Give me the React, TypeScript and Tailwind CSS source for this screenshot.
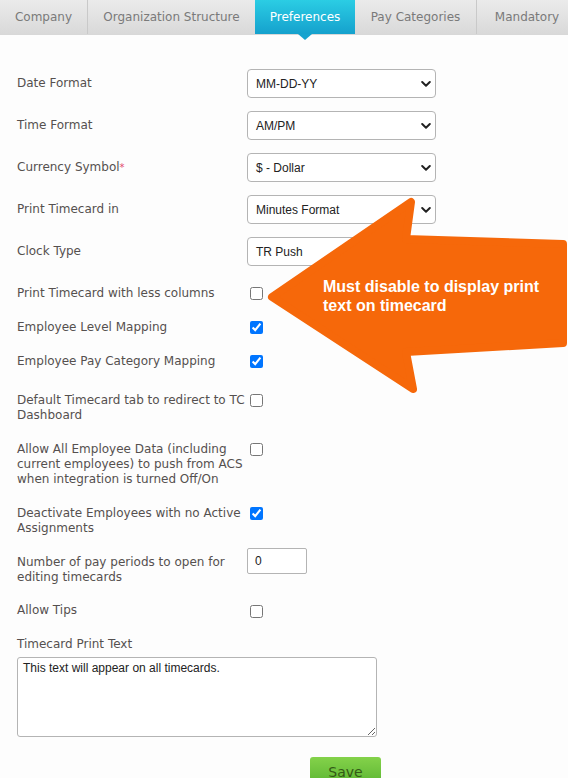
import React from "react";

const labelFont = { fontFamily: '"DejaVu Sans", Verdana, sans-serif' };

function Chevron() {
  return (
    <svg width="10" height="7" viewBox="0 0 10 7" className="absolute right-[4px] top-1/2 -translate-y-1/2">
      <path d="M1.2 1.5 L5 5.2 L8.8 1.5" fill="none" stroke="#222" strokeWidth="2" strokeLinecap="round" strokeLinejoin="round" />
    </svg>
  );
}

function SelectRow({ label, value, required, mt }: { label: string; value: string; required?: boolean; mt: string }) {
  return (
    <div className={`flex items-center h-[29px] ${mt}`}>
      <div className="w-[230px] text-[12px] leading-[15px] text-[#55504f]" style={labelFont}>
        {label}
        {required && <span className="text-[#e2456f] text-[10px] align-top">*</span>}
      </div>
      <div className="relative w-[189px] h-[29px] rounded-[4px] border border-[#b4b4b4] bg-white">
        <div className="pl-[8px] h-full flex items-center text-[12px] text-[#222] font-['Liberation_Sans',Arial,sans-serif]">{value}</div>
        <Chevron />
      </div>
    </div>
  );
}

function CheckRow({ label, checked, mt, cbmt = "mt-[1px]" }: { label: React.ReactNode; checked?: boolean; mt: string; cbmt?: string }) {
  return (
    <div className={`flex items-start ${mt}`}>
      <div className="w-[233px] text-[12px] leading-[15px] text-[#55504f]" style={labelFont}>
        {label}
      </div>
      <input type="checkbox" defaultChecked={checked} className={`m-0 w-[13px] h-[13px] ${cbmt}`} />
    </div>
  );
}

export default function App() {
  const tabs = [
    { name: "Company", w: "w-[88px]" },
    { name: "Organization Structure", w: "w-[167px]" },
    { name: "Preferences", w: "w-[100px]", active: true },
    { name: "Pay Categories", w: "w-[122px]" },
    { name: "Mandatory", w: "w-[100px]" },
  ];
  return (
    <div className="relative w-[568px] h-[778px] overflow-hidden bg-[#fdfdfd]">
      {/* tabs */}
      <div className="flex h-[35px] border-b border-[#d8d8d8] bg-gradient-to-b from-[#ebebeb] to-[#d9d9d9]" style={labelFont}>
        {tabs.map((t, i) =>
          t.active ? (
            <div key={t.name} className={`relative ${t.w} shrink-0 h-[34px] flex items-center justify-center text-[12px] text-white bg-gradient-to-b from-[#2bcde4] to-[#15a1cd]`}>
              {t.name}
              <div className="absolute left-1/2 -translate-x-1/2 top-[34px] w-0 h-0 border-l-[7px] border-r-[7px] border-t-[6px] border-l-transparent border-r-transparent border-t-[#16a3cf]" />
            </div>
          ) : (
            <div
              key={t.name}
              className={`${t.w} shrink-0 h-[34px] flex items-center justify-center text-[12px] text-[#7a7a7a] ${i === 0 || i === 3 ? "border-r border-[#c9c9c9]" : ""}`}
            >
              {t.name}
            </div>
          )
        )}
      </div>

      <div className="pl-[17px]">
        <SelectRow label="Date Format" value="MM-DD-YY" mt="mt-[34px]" />
        <SelectRow label="Time Format" value="AM/PM" mt="mt-[13px]" />
        <SelectRow label="Currency Symbol" value="$ - Dollar" required mt="mt-[13px]" />
        <SelectRow label="Print Timecard in" value="Minutes Format" mt="mt-[13px]" />
        <SelectRow label="Clock Type" value="TR Push" mt="mt-[13px]" />

        <CheckRow label="Print Timecard with less columns" mt="mt-[20px]" />
        <CheckRow label="Employee Level Mapping" checked mt="mt-[19px]" />
        <CheckRow label="Employee Pay Category Mapping" checked mt="mt-[19px]" />
        <CheckRow label="Default Timecard tab to redirect to TC Dashboard" mt="mt-[24px]" />
        <CheckRow label="Allow All Employee Data (including current employees) to push from ACS when integration is turned Off/On" mt="mt-[19px]" />
        <CheckRow label="Deactivate Employees with no Active Assignments" checked mt="mt-[19px]" />

        <div className="flex items-start mt-[12px]">
          <div className="w-[230px] mt-[7px] text-[12px] leading-[15px] text-[#55504f]" style={labelFont}>
            Number of pay periods to open for editing timecards
          </div>
          <div className="w-[60px] h-[26px] rounded-[2px] border border-[#b4b4b4] bg-white pl-[7px] flex items-center text-[12px] text-[#222] font-['Liberation_Sans',Arial,sans-serif]">
            0
          </div>
        </div>

        <CheckRow label="Allow Tips" mt="mt-[18px]" cbmt="mt-[2px]" />

        <div className="mt-[19px] text-[12px] leading-[15px] text-[#55504f]" style={labelFont}>
          Timecard Print Text
        </div>
        <textarea
          className="mt-[5px] block w-[360px] h-[80px] rounded-[3px] border border-[#b4b4b4] bg-white px-[5px] py-[3px] text-[12px] leading-[15px] text-[#222] font-['Liberation_Sans',Arial,sans-serif] resize-y"
          defaultValue="This text will appear on all timecards."
        />
        <div className="mt-[20px] ml-[293px] w-[71px] h-[28px] rounded-t-[3px] bg-gradient-to-b from-[#84d24a] to-[#5ab532] flex items-center justify-center pt-[3px] text-[14px] text-[#335a16]" style={labelFont}>
          Save
        </div>
      </div>

      {/* callout arrow */}
      <svg className="absolute left-0 top-0 pointer-events-none" width="568" height="778" viewBox="0 0 568 778">
        <polygon
          points="272,297 411,202 406,239 563,244 563,343 406,352 413,389"
          fill="#f6680a"
          stroke="#f6680a"
          strokeWidth="8"
          strokeLinejoin="round"
        />
      </svg>
      <div className="absolute left-[323px] top-[277px] text-[16px] leading-[19px] font-bold text-white font-['Liberation_Sans',Arial,sans-serif]">
        Must disable to display print
        <br />
        text on timecard
      </div>
    </div>
  );
}
